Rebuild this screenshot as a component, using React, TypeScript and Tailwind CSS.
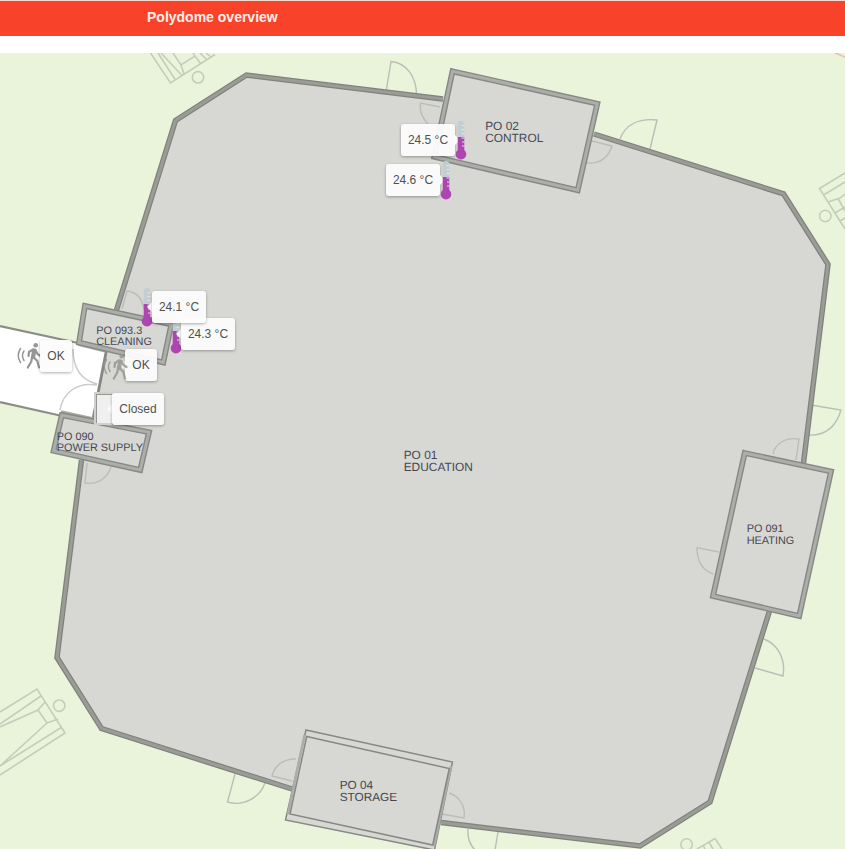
import React from "react";

type Pt = [number, number];
const pts = (a: Pt[]) => a.map((p) => p.join(",")).join(" ");

const FONT = "font-['Liberation_Sans',Arial,sans-serif]";

const hall: Pt[] = [
  [116.5, 310], [175.5, 120.5], [246.5, 75], [443, 99], [520, 110], [594, 134], [783.5, 193.8],
  [828, 264.3], [803.5, 463], [790, 540], [769.5, 611], [710, 802], [640, 846], [441, 822],
  [360, 810], [292, 789], [101.5, 728.5], [57, 657.5], [81.5, 460], [93, 417], [106.5, 350],
];

const walls: Pt[][] = [
  [[116.5, 310], [175.5, 120.5], [246.5, 75], [443, 99]],
  [[594, 134], [783.5, 193.8], [828, 264.3], [803.5, 463]],
  [[769.5, 611], [710, 802], [640, 846], [441, 822.5]],
  [[292, 789], [101.5, 728.5], [57, 657.5], [81.5, 460]],
];

const rooms: Pt[][] = [
  [[452.5, 71.3], [597.3, 103.6], [577.7, 190.3], [434.3, 156.7]],
  [[744.7, 453], [831, 471.5], [799.2, 616], [713, 596]],
  [[84.9, 305.9], [171.3, 324.4], [163.3, 362.5], [79, 342.5]],
  [[61.8, 415.2], [149, 432.2], [140.2, 470], [53.6, 450.8]],
];

function Room({ p }: { p: Pt[] }) {
  return (
    <g strokeLinejoin="miter">
      <polygon points={pts(p)} fill="#d7d8d3" stroke="#868884" strokeWidth="5.8" />
      <polygon points={pts(p)} fill="none" stroke="#acaea9" strokeWidth="3" />
    </g>
  );
}

function Label({ x, y, size, lines }: { x: number; y: number; size: number; lines: string[] }) {
  return (
    <text fontSize={size} fill="#464753" textRendering="geometricPrecision">
      {lines.map((t, i) => (
        <tspan key={t} x={x} y={y + i * (size > 11 ? 12.1 : 11.2)}>{t}</tspan>
      ))}
    </text>
  );
}

const doors = [
  "M386 92 L391 61.5 C407 63 416 77 416.5 94",
  "M440 107 L420.5 103 C419 112 424 120 428 124",
  "M620 139 C625 125 638 118 657 120 L650 149",
  "M592 141 L612 146 C608 158 599 164 587 163",
  "M811 405 L841 410 C836 427 825 436 808 435",
  "M773 454 C775 444 785 437 799 439 L796 460",
  "M719 552 L697 547.5 C697 561 702 570 713 574",
  "M764 639 C777 644 786 658 783 676 L755 668",
  "M235 774 L227.5 802 C244 807 260 797 265 783",
  "M296 759 C283 759 275 765 272 776 L292 781",
  "M449 793 C459 796 466 806 464 818 L442 814",
  "M468 829 C467 842 473 851 484 856 M498 832 L495 850",
  "M122 309 L127 291 C136 292 142 298 144 309",
  "M87 463 L85 483 C97 485 107 479 111 467",
];

function FloorPlan() {
  return (
    <svg width="845" height="796" viewBox="0 53 845 796" className={`block ${FONT}`}>
      <rect x="0" y="53" width="845" height="796" fill="#eaf4da" />
      <path d="M835 53 L845 57" stroke="#eebfaa" strokeWidth="1.5" />

      <g fill="none" stroke="#c6ccbb" strokeWidth="1.6">
        <path d="M150.500 53 L170.500 83 L215 54.500 M158 53 L175.500 80 M161 53 L182 75.500 M173 53 L181 65 L195 56 L201 64 M181 65 L184 74 M195 56 L193 53 M200 53 L207 60 M206 53 L211 57" />
        <circle cx="198" cy="77.300" r="5.700" />
        <path d="M0 712 L37 689 L65 733 L0 775 M0 724 L41 696 M0 727 L38 710 L45 702 M38 710 L47 723 L58 719 M47 723 L0 766 M62 727 L0 766" />
        <circle cx="59.200" cy="705.700" r="5.700" />
        <path d="M845 173 L819.500 188.500 L845 229 M823.500 195 L845 182 M828 202 L840 198 L845 194 M838 198.500 L845 211 M835 213 L845 207 M840 221 L845 218" />
        <circle cx="825.300" cy="216" r="5.700" />
        <circle cx="686.600" cy="844.500" r="5.700" />
        <path d="M697 849 L715 838.500 L722 849 M709 842 L713 849 M703 845 L705 849" />
      </g>

      <polygon points="0,326 106.500,350 93,422 0,402" fill="#fff" />
      <polygon points={pts(hall)} fill="#d7d8d3" />

      <g fill="none" stroke="#bbbdb8" strokeWidth="1.400">
        {doors.map((d) => <path key={d} d={d} />)}
      </g>

      {walls.map((w, i) => (
        <g key={i} fill="none">
          <polyline points={pts(w)} stroke="#80827e" strokeWidth="5.500" />
          <polyline points={pts(w)} stroke="#9a9d95" strokeWidth="3" />
        </g>
      ))}

      <g fill="none">
        <path d="M0 326 L78 343 M0 402 L60 415.500" stroke="#8b8d89" strokeWidth="2.200" />
        <path d="M106.500 350 L93 419" stroke="#858783" strokeWidth="2.800" />
        <path d="M78 344 L106 351 M61 412 L93 419" stroke="#a7a9a4" strokeWidth="3.500" />
        <path d="M73 349 C73 368 81 380 97 384 M60 410 C63 393 76 382 97 385" stroke="#cbccc9" strokeWidth="1.500" />
      </g>

      {rooms.map((r, i) => <Room key={i} p={r} />)}

      <polygon points="306,730 452.500,762 434.500,850 285.500,820" fill="#d7d8d3" stroke="#868884" strokeWidth="1.500" />
      <path d="M304.500 735 L288 814 M451 766 L434 846" stroke="#abada8" strokeWidth="2.500" />
      <polygon points="306.700,736.500 449.300,768.500 432.700,845 290,814" fill="#d7d8d3" stroke="#868884" strokeWidth="1.500" />

      <Label x={485.2} y={130.2} size={11.9} lines={["PO 02", "CONTROL"]} />
      <Label x={403.7} y={458.7} size={11.9} lines={["PO 01", "EDUCATION"]} />
      <Label x={96.2} y={333.6} size={10.9} lines={["PO 093.3", "CLEANING"]} />
      <Label x={56.7} y={440} size={10.9} lines={["PO 090", "POWER SUPPLY"]} />
      <Label x={746.7} y={532.4} size={10.9} lines={["PO 091", "HEATING"]} />
      <Label x={339.7} y={789} size={11.8} lines={["PO 04", "STORAGE"]} />
    </svg>
  );
}

function Thermometer({ className = "" }: { className?: string }) {
  return (
    <svg width="12" height="40" viewBox="0 0 12 40" className={`shrink-0 ${className}`}>
      <path d="M2.700 4 Q2.700 1 6 1 Q9.300 1 9.300 4 V18 H2.700 Z" fill="#c3ced2" />
      <path d="M2.700 17 H9.300 V30 A5.300 5.300 0 1 1 2.700 30 Z" fill="#ad46b0" />
      <path d="M6.500 5.500 H9.500 M6.500 9.500 H9.500 M6.500 13.500 H9.500 M6.500 18 H9.500 M7 22 H9.500 M7 26 H9.500" stroke="#e2e4e3" strokeWidth="1.200" />
    </svg>
  );
}

function Walker({ className = "" }: { className?: string }) {
  return (
    <svg width="26" height="28" viewBox="0 0 26 28" className={`shrink-0 ${className}`} fill="none" stroke="#969795" strokeLinecap="round" strokeLinejoin="round">
      <path d="M3.500 6.500 Q-1 13.500 3.500 20.500 M7 9 Q4 13.500 7 18.500" strokeWidth="1.500" />
      <circle cx="18.700" cy="3.200" r="2.300" fill="#969795" stroke="none" />
      <path d="M17.300 8.500 L16 15" strokeWidth="4.200" />
      <path d="M16 7.500 L12 10 L11.500 14 M18.500 8 L20.500 12 L23.500 14 M15 15 L14.300 19.500 L10.800 25.500 M16.500 15 L20.300 19 L22 25.500" strokeWidth="2.200" />
    </svg>
  );
}

function DoorFrame() {
  return (
    <div className="h-[33px] w-[18px] shrink-0 border-2 border-r-0 border-[#d0d1ce]">
      <div className="h-full border-t border-l border-[#959793] bg-[#eeefee]" />
    </div>
  );
}

function Tag({ text, width, arrow }: { text: string; width: string; arrow?: "left" | "right" }) {
  return (
    <div className={`flex h-8 shrink-0 items-center justify-center ${width}`}>
      {arrow === "left" && <span className="-ml-[5px] border-y-[5px] border-r-[5px] border-y-transparent border-r-[#fcfcfc]" />}
      <span className="flex h-8 flex-1 items-center justify-center rounded-[3px] bg-[#fcfcfc]/95 text-xs whitespace-nowrap text-[#505050] shadow-[0_1px_3px_rgba(0,0,0,0.32)]">
        {text}
      </span>
      {arrow === "right" && <span className="-mr-[5px] border-y-[5px] border-l-[5px] border-y-transparent border-l-[#fcfcfc]" />}
    </div>
  );
}

function Pin({ at, children }: { at: string; children: React.ReactNode }) {
  return <div className={`absolute flex items-center ${at}`}>{children}</div>;
}

export default function App() {
  return (
    <div className={`flex h-[849px] w-[845px] flex-col gap-[17px] overflow-hidden bg-white ${FONT}`}>
      <header className="flex h-9 shrink-0 items-center border-t border-[#f7d8cf] bg-[#f9422a] pb-[3px] pl-[147px] text-sm font-bold text-[#fff0ea]">
        Polydome overview
      </header>
      <main className="relative">
        <FloorPlan />
        <Pin at="top-[67px] left-[401px]">
          <Tag width="w-[54px]" text="24.5 °C" arrow="right" />
          <Thermometer />
        </Pin>
        <Pin at="top-[107px] left-[386px]">
          <Tag width="w-[54px]" text="24.6 °C" arrow="right" />
          <Thermometer />
        </Pin>
        <Pin at="top-[261px] left-[170px]">
          <Thermometer className="-mr-px" />
          <Tag width="w-[54px]" text="24.3 °C" arrow="left" />
        </Pin>
        <Pin at="top-[234px] left-[141px]">
          <Thermometer className="-mr-px" />
          <Tag width="w-[54px]" text="24.1 °C" arrow="left" />
        </Pin>
        <Pin at="top-[287px] left-[17px]">
          <Walker className="-mr-[3px]" />
          <Tag width="w-8" text="OK" />
        </Pin>
        <Pin at="top-[296px] left-[103px]">
          <Walker className="-mr-1 self-end opacity-85" />
          <Tag width="w-8" text="OK" arrow="left" />
        </Pin>
        <Pin at="top-[339px] left-[94px]">
          <DoorFrame />
          <Tag width="w-[52px]" text="Closed" arrow="left" />
        </Pin>
      </main>
    </div>
  );
}
